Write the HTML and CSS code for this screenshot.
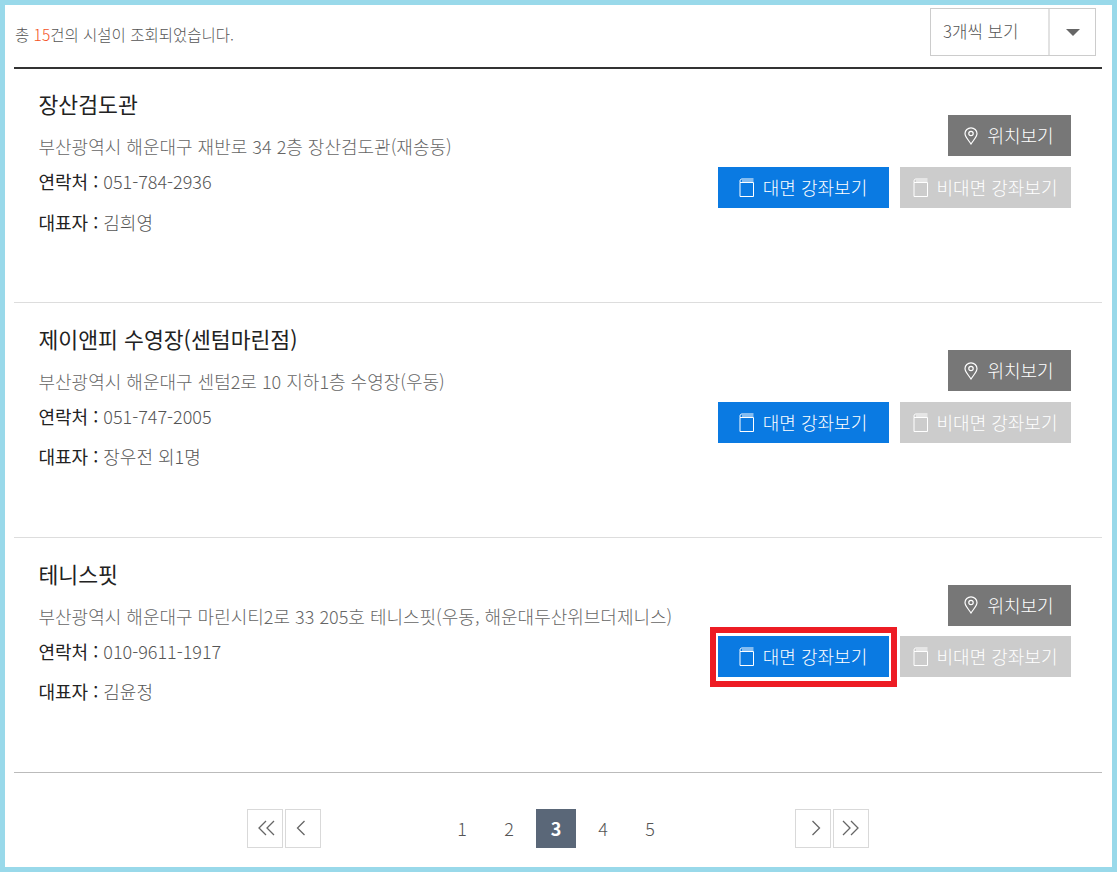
FILE: index.html
```html
<!DOCTYPE html>
<html lang="ko">
<head>
  <meta charset="UTF-8" />
  <title>시설 조회</title>
  <link rel="stylesheet" href="styles.css">
</head>
<body>
  <svg class="sprite" width="0" height="0">
    <symbol id="pin" viewBox="0 0 14 18">
      <path d="M7 17C4.500 13 1 10 1 6.500a6 5.700 0 0 1 12 0C13 10 9.500 13 7 17z" fill="none" stroke="currentColor" stroke-width="1.200"/>
      <circle cx="7" cy="6.500" r="2.200" fill="none" stroke="currentColor" stroke-width="1.200"/>
    </symbol>
    <symbol id="book" viewBox="0 0 15 19">
      <path d="M1 4.500V18.500H14.500V4.500H1V3C1 1.500 2 1 3 1H14.500M3 3H14.500" fill="none" stroke="currentColor" stroke-width="1"/>
    </symbol>
  </svg>

  <div class="frame">
    <div class="top">
      <p class="total">총 <em>15</em>건의 시설이 조회되었습니다.</p>
      <div class="select">
        <span class="select-label">3개씩 보기</span>
        <span class="select-arrow"><i></i></span>
      </div>
    </div>

    <ul class="list">
      <li class="item">
        <div class="info">
          <h2>장산검도관</h2>
          <p class="addr">부산광역시 해운대구 재반로 34 2층 장산검도관(재송동)</p>
          <p class="line"><b>연락처 :</b> 051-784-2936</p>
          <p class="line"><b>대표자 :</b> 김희영</p>
        </div>
        <div class="actions">
          <a class="btn btn-gray"><svg class="ico-pin"><use href="#pin"/></svg>위치보기</a>
          <div class="btn-row">
            <a class="btn btn-blue"><svg class="ico-book"><use href="#book"/></svg>대면 강좌보기</a>
            <a class="btn btn-off"><svg class="ico-book"><use href="#book"/></svg>비대면 강좌보기</a>
          </div>
        </div>
      </li>
      <li class="item">
        <div class="info">
          <h2>제이앤피 수영장(센텀마린점)</h2>
          <p class="addr">부산광역시 해운대구 센텀2로 10 지하1층 수영장(우동)</p>
          <p class="line"><b>연락처 :</b> 051-747-2005</p>
          <p class="line"><b>대표자 :</b> 장우전 외1명</p>
        </div>
        <div class="actions">
          <a class="btn btn-gray"><svg class="ico-pin"><use href="#pin"/></svg>위치보기</a>
          <div class="btn-row">
            <a class="btn btn-blue"><svg class="ico-book"><use href="#book"/></svg>대면 강좌보기</a>
            <a class="btn btn-off"><svg class="ico-book"><use href="#book"/></svg>비대면 강좌보기</a>
          </div>
        </div>
      </li>
      <li class="item">
        <div class="info">
          <h2>테니스핏</h2>
          <p class="addr">부산광역시 해운대구 마린시티2로 33 205호 테니스핏(우동, 해운대두산위브더제니스)</p>
          <p class="line"><b>연락처 :</b> 010-9611-1917</p>
          <p class="line"><b>대표자 :</b> 김윤정</p>
        </div>
        <div class="actions">
          <a class="btn btn-gray"><svg class="ico-pin"><use href="#pin"/></svg>위치보기</a>
          <div class="btn-row">
            <a class="btn btn-blue marked"><svg class="ico-book"><use href="#book"/></svg>대면 강좌보기</a>
            <a class="btn btn-off"><svg class="ico-book"><use href="#book"/></svg>비대면 강좌보기</a>
          </div>
        </div>
      </li>
    </ul>

    <div class="paging">
      <div class="arrows">
        <a class="arrow first"><svg width="20" height="16" viewBox="0 0 20 16"><path d="M9 1L2 8l7 7M17 1l-7 7 7 7"/></svg></a>
        <a class="arrow prev"><svg width="10" height="16" viewBox="0 0 10 16"><path d="M8.500 1L1.500 8l7 7"/></svg></a>
      </div>
      <div class="pages">
        <a>1</a>
        <a>2</a>
        <a class="current">3</a>
        <a>4</a>
        <a>5</a>
      </div>
      <div class="arrows">
        <a class="arrow next"><svg width="10" height="16" viewBox="0 0 10 16"><path d="M1.500 1l7 7-7 7"/></svg></a>
        <a class="arrow last"><svg width="20" height="16" viewBox="0 0 20 16"><path d="M3 1l7 7-7 7M11 1l7 7-7 7"/></svg></a>
      </div>
    </div>
  </div>
</body>
</html>
```
FILE: styles.css
```css
html, body {
  margin: 0;
  padding: 0;
  background-color: #fff;
}
body {
  font-family: 'Noto Sans CJK KR', 'Noto Sans', sans-serif;
  font-weight: 300;
  color: #666;
}
p, h2, ul {
  margin: 0;
  padding: 0;
}
.sprite {
  position: absolute;
}
.frame {
  box-sizing: border-box;
  width: 1117px;
  height: 872px;
  border: 5px solid #99d9ea;
  padding: 0 10px 0 9px;
}
.top {
  display: flex;
  justify-content: space-between;
  align-items: flex-start;
  height: 62px;
  border-bottom: 2px solid #333;
}
.total {
  padding: 18px 0 0 1px;
  font-size: 15.500px;
  line-height: 22px;
  color: #555;
}
.total em {
  font-style: normal;
  color: #f4511e;
}
.select {
  display: flex;
  box-sizing: border-box;
  width: 166px;
  height: 48px;
  margin: 3px 6px 0 0;
  border: 1px solid #ccc;
  font-size: 16.800px;
}
.select-label {
  flex: 1;
  padding-left: 12px;
  line-height: 45px;
  color: #555;
}
.select-arrow {
  display: flex;
  align-items: center;
  justify-content: center;
  width: 45px;
  border-left: 2px solid #e2e2e2;
}
.select-arrow i {
  width: 0;
  height: 0;
  border-left: 7px solid transparent;
  border-right: 7px solid transparent;
  border-top: 7px solid #666;
}
.list {
  list-style: none;
  margin-top: -0.600px;
}
.item {
  display: flex;
  justify-content: space-between;
  box-sizing: border-box;
  height: 234.800px;
  padding: 20.500px 31px 0 24.500px;
  border-bottom: 1px solid #ddd;
}
.item:last-child {
  border-bottom-color: #bbb;
}
.info h2 {
  font-size: 21.600px;
  font-weight: 400;
  line-height: 30px;
  color: #222;
}
.addr {
  margin-top: 14.500px;
  font-size: 18px;
  line-height: 26px;
  color: #666;
}
.line {
  margin-top: 8.700px;
  font-size: 18px;
  line-height: 26px;
  color: #555;
}
.line + .line {
  margin-top: 14.600px;
}
.line b {
  font-weight: 400;
  color: #222;
}
.actions {
  display: flex;
  flex-direction: column;
  align-items: flex-end;
  gap: 10.600px;
  padding-top: 26.300px;
}
.btn-row {
  display: flex;
  gap: 11px;
}
.btn {
  position: relative;
  display: flex;
  align-items: center;
  justify-content: center;
  box-sizing: border-box;
  height: 41px;
  width: 171px;
  padding: 0 1px 1px 0;
  font-size: 18px;
  color: #fff;
}
.btn-gray {
  width: 123px;
  background-color: #777;
}
.btn-blue {
  background-color: #0a7ae2;
}
.btn-off {
  background-color: #ccc;
}
.ico-pin {
  width: 14px;
  height: 18px;
  margin: 1px 9px 0 0;
}
.ico-book {
  width: 15px;
  height: 19px;
  margin: 1px 9px 0 0;
}
.marked::after {
  content: "";
  position: absolute;
  top: -9px;
  left: -8px;
  right: -8px;
  bottom: -10px;
  border: 6px solid #ed1c24;
  box-sizing: border-box;
}
.paging {
  display: flex;
  justify-content: space-between;
  align-items: center;
  width: 622px;
  margin: 36px 0 0 233px;
}
.arrows {
  display: flex;
  gap: 2px;
}
.arrow {
  display: flex;
  align-items: center;
  justify-content: center;
  box-sizing: border-box;
  width: 36px;
  height: 39px;
  border: 1px solid #d9d9d9;
}
.arrow svg {
  fill: none;
  stroke: #666;
  stroke-width: 1.300;
}
.first svg {
  margin-left: 4px;
}
.prev svg {
  margin-right: 5px;
}
.next svg {
  margin-left: 5px;
}
.last svg {
  margin-right: 3px;
}
.pages {
  display: flex;
  gap: 7px;
  padding-right: 4px;
}
.pages a {
  width: 40px;
  height: 39px;
  font-size: 18px;
  line-height: 39px;
  text-align: center;
  color: #555;
}
.pages .current {
  font-weight: 700;
  color: #fff;
  background-color: #5a6778;
}
```
